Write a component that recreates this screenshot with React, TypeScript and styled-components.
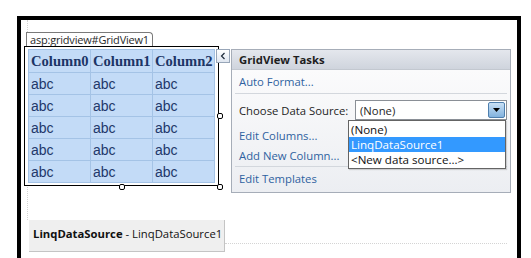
import styled, { createGlobalStyle } from "styled-components";

const GlobalStyle = createGlobalStyle`
  html, body {
    margin: 0;
    padding: 0;
    background: #ffffff;
  }
  body {
    font-family: "Open Sans", "Noto Sans", sans-serif;
    overflow: hidden;
  }
`;

const columns = ["Column0", "Column1", "Column2"];
const rows = [0, 1, 2, 3, 4];

const tasks = {
  top: ["Auto Format..."],
  middle: ["Edit Columns...", "Add New Column..."],
  bottom: ["Edit Templates"],
};

const sources = ["(None)", "LinqDataSource1", "<New data source...>"];

export default function App() {
  return (
    <>
      <GlobalStyle />
      <Frame>
        <Row>
          <LeftCol>
            <Tag>asp:gridview#GridView1</Tag>
            <Selection>
              <Grid>
                <thead>
                  <tr>
                    {columns.map((c) => (
                      <HeadCell key={c}>{c}</HeadCell>
                    ))}
                  </tr>
                </thead>
                <tbody>
                  {rows.map((r) => (
                    <tr key={r}>
                      {columns.map((c) => (
                        <Cell key={c}>abc</Cell>
                      ))}
                    </tr>
                  ))}
                </tbody>
              </Grid>
              <SmartTag>
                <svg width="6" height="8" viewBox="0 0 6 8">
                  <path d="M4.5 1 L1.5 4 L4.5 7" fill="none" stroke="#1e2a3a" strokeWidth="1.2" />
                </svg>
              </SmartTag>
              <Handle $left={192} $top={66} />
              <Handle $left={94} $top={137} />
              <Handle $left={192} $top={137} />
            </Selection>
            <SourceBox>
              <b>LinqDataSource</b> - LinqDataSource1
            </SourceBox>
          </LeftCol>

          <Panel>
            <PanelHeader>GridView Tasks</PanelHeader>
            <PanelBody>
              <Group>
                {tasks.top.map((t) => (
                  <TaskLink key={t} $height={23}>{t}</TaskLink>
                ))}
              </Group>
              <Group>
                <ChooseRow>
                  <Label>Choose Data Source:</Label>
                  <SelectWrap>
                    <Select>
                      <span>(None)</span>
                      <DropButton>
                        <svg width="7" height="4" viewBox="0 0 7 4">
                          <path d="M0 0 H7 L3.5 4 Z" fill="#000" />
                        </svg>
                      </DropButton>
                    </Select>
                    <DropList>
                      {sources.map((s, i) => (
                        <DropItem key={s} $active={i === 1}>{s}</DropItem>
                      ))}
                    </DropList>
                  </SelectWrap>
                </ChooseRow>
                {tasks.middle.map((t) => (
                  <TaskLink key={t} $height={20}>{t}</TaskLink>
                ))}
              </Group>
              <Group $last>
                {tasks.bottom.map((t) => (
                  <TaskLink key={t} $height={24}>{t}</TaskLink>
                ))}
              </Group>
            </PanelBody>
          </Panel>
        </Row>
      </Frame>
    </>
  );
}

const Frame = styled.div`
  position: relative;
  box-sizing: border-box;
  margin: 16px 0 0 17px;
  width: 504px;
  height: 242px;
  border: 4px solid #000;
  border-bottom: none;
  background: #fff;
  padding: 12px 0 0 3px;
  overflow: hidden;

  /* faint dotted edges of the design surface */
  &::before {
    content: "";
    position: absolute;
    left: 6px;
    top: 0;
    height: 200px;
    border-left: 1px dotted #d4d4d4;
  }

  &::after {
    content: "";
    position: absolute;
    left: 204px;
    top: 223px;
    width: 282px;
    border-top: 1px dotted #d4d4d4;
  }
`;

const Row = styled.div`
  position: relative;
  z-index: 1;
  display: flex;
  align-items: flex-start;
  gap: 12px;
`;

const LeftCol = styled.div`
  width: 195px;
  display: flex;
  flex-direction: column;
  align-items: flex-start;
`;

const Tag = styled.div`
  box-sizing: border-box;
  margin-left: 2px;
  width: 127px;
  height: 14px;
  padding: 0 0 0 3px;
  border: 1px solid #7a7a7a;
  border-bottom: none;
  border-top-right-radius: 4px;
  background: #fff;
  font-size: 11px;
  line-height: 13px;
  color: #2a2a2a;
  white-space: nowrap;
  letter-spacing: -0.2px;
`;

const Selection = styled.div`
  position: relative;
  box-sizing: border-box;
  width: 195px;
  height: 140px;
  border: 1px solid #000;
  padding: 2px 3px 0;
  background: #fff;
`;

const Grid = styled.table`
  border-collapse: collapse;
  width: 187px;
  table-layout: fixed;
  background: #c3dbf7;
`;

const HeadCell = styled.th`
  height: 22px;
  padding: 0 0 0 2px;
  border: 1px solid #a4c3e6;
  text-align: left;
  font-family: "Liberation Serif", serif;
  font-weight: bold;
  font-size: 14.6px;
  color: #1c3566;
  white-space: nowrap;
  overflow: visible;
`;

const Cell = styled.td`
  height: 21px;
  padding: 0 0 0 2px;
  border: 1px solid #a4c3e6;
  font-family: "Liberation Sans", Arial, sans-serif;
  font-size: 14px;
  color: #22386a;
`;

const SmartTag = styled.div`
  position: absolute;
  left: 191px;
  top: 2px;
  box-sizing: border-box;
  width: 14px;
  height: 14px;
  border: 1px solid #98a6b8;
  background: linear-gradient(#ffffff, #dfe6f0);
  display: flex;
  align-items: center;
  justify-content: center;
`;

const Handle = styled.div<{ $left: number; $top: number }>`
  position: absolute;
  left: ${(p) => p.$left}px;
  top: ${(p) => p.$top}px;
  box-sizing: border-box;
  width: 6px;
  height: 6px;
  border: 1px solid #000;
  border-radius: 2px;
  background: #fff;
`;

const SourceBox = styled.div`
  flex-shrink: 0;
  box-sizing: border-box;
  margin: 34px 0 0 5px;
  width: 196px;
  height: 32px;
  padding: 6px 0 0 4px;
  background: #efefef;
  border-right: 1px solid #c4c4c4;
  border-bottom: 1px solid #c4c4c4;
  font-size: 11.3px;
  color: #111;
  white-space: nowrap;

  b {
    font-weight: 700;
  }
`;

const Panel = styled.div`
  box-sizing: border-box;
  margin-top: 17px;
  width: 280px;
  height: 144px;
  border: 1px solid #a6adb8;
  display: flex;
  flex-direction: column;
  font-size: 11.3px;
`;

const PanelHeader = styled.div`
  height: 19px;
  padding-left: 7px;
  line-height: 19px;
  font-weight: 700;
  color: #1e1e1e;
  background: linear-gradient(#e4e7ed, #cfd4dd);
  border-bottom: 1px solid #c3c8d0;
`;

const PanelBody = styled.div`
  flex: 1;
  padding: 0 3px;
  background: linear-gradient(#fbfbfc, #eceef2);
`;

const Group = styled.div<{ $last?: boolean }>`
  border-bottom: ${(p) => (p.$last ? "none" : "1px solid #d3d7dd")};
`;

const TaskLink = styled.div<{ $height: number }>`
  height: ${(p) => p.$height}px;
  line-height: ${(p) => p.$height}px;
  padding-left: 4px;
  color: #2f62a0;
  white-space: nowrap;
`;

const ChooseRow = styled.div`
  display: flex;
  align-items: center;
  height: 32px;
  padding-left: 4px;
`;

const Label = styled.div`
  width: 117px;
  color: #1e1e1e;
  white-space: nowrap;
`;

const SelectWrap = styled.div`
  position: relative;
`;

const Select = styled.div`
  box-sizing: border-box;
  width: 152px;
  height: 20px;
  border: 1px solid #8a8f96;
  background: #fff;
  display: flex;
  align-items: center;
  justify-content: space-between;
  padding: 0 1px 0 4px;
  color: #1e1e1e;
`;

const DropButton = styled.div`
  box-sizing: border-box;
  width: 17px;
  height: 16px;
  border: 1px solid #4f7fae;
  border-radius: 2px;
  background: linear-gradient(#c9e0f5, #82b2de);
  display: flex;
  align-items: center;
  justify-content: center;
`;

const DropList = styled.div`
  position: absolute;
  left: -7px;
  top: 20px;
  box-sizing: border-box;
  width: 158px;
  border: 1px solid #646464;
  background: #fff;
  padding: 1px 0;
  box-shadow: 1px 1px 1px rgba(0, 0, 0, 0.15);
  z-index: 2;
`;

const DropItem = styled.div<{ $active?: boolean }>`
  height: 15px;
  line-height: 15px;
  padding-left: 2px;
  font-size: 11.6px;
  color: ${(p) => (p.$active ? "#fff" : "#111")};
  background: ${(p) => (p.$active ? "#3399ff" : "transparent")};
  white-space: nowrap;
`;
